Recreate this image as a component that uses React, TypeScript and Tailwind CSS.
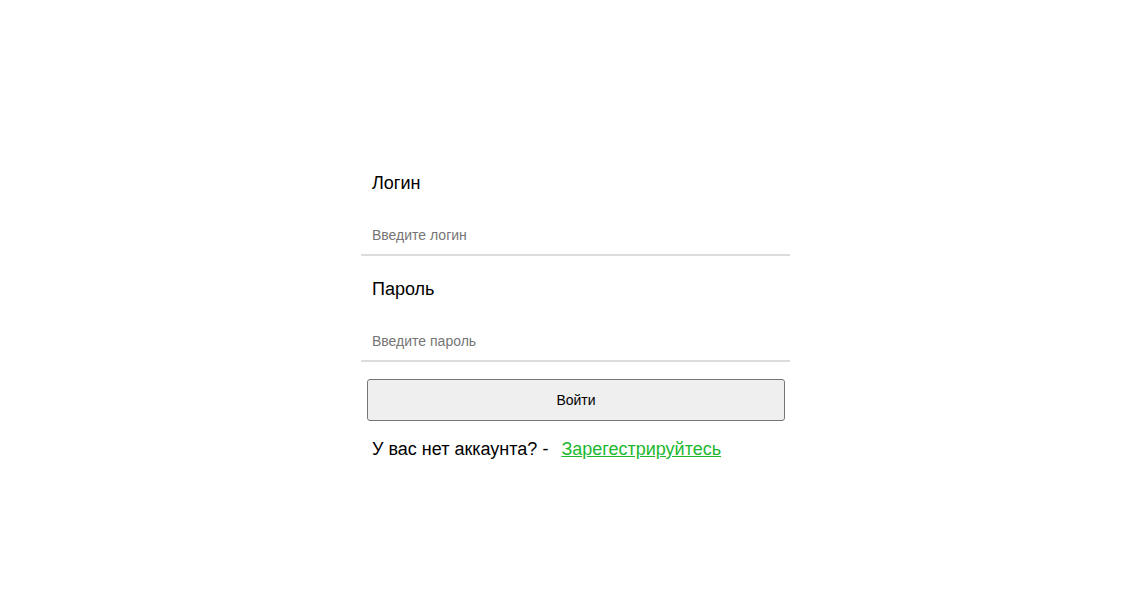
export default function App() {
  return (
    <div className="min-h-screen bg-white pt-[173px] pl-[361px] font-['Liberation_Sans',Arial,sans-serif] text-black">
      <form className="w-[429px] flex flex-col" onSubmit={(e) => e.preventDefault()}>
        {/* Login */}
        <label className="px-[11px] text-[18px] leading-[21px]">Логин</label>
        <input
          type="text"
          placeholder="Введите логин"
          className="mt-[24px] h-[38px] w-full px-[11px] pb-[2px] text-[14px] leading-[16px] border-b-2 border-[#dddddd] outline-none placeholder:text-[#757575]"
        />

        {/* Password */}
        <label className="mt-[23px] px-[11px] text-[18px] leading-[21px]">Пароль</label>
        <input
          type="password"
          placeholder="Введите пароль"
          className="mt-[24px] h-[38px] w-full px-[11px] pb-[2px] text-[14px] leading-[16px] border-b-2 border-[#dddddd] outline-none placeholder:text-[#757575]"
        />

        <button
          type="submit"
          className="ml-[6px] mr-[5px] mt-[17px] h-[42px] border border-[#767676] bg-[#efefef] rounded-[3px] text-[14px]"
        >
          Войти
        </button>

        <div className="mt-[18px] px-[11px] text-[18px] leading-[21px] flex">
          <span>У вас нет аккаунта? -</span>
          <a href="#" className="ml-[13px] text-[#1db82f] underline">
            Зарегестрируйтесь
          </a>
        </div>
      </form>
    </div>
  )
}
